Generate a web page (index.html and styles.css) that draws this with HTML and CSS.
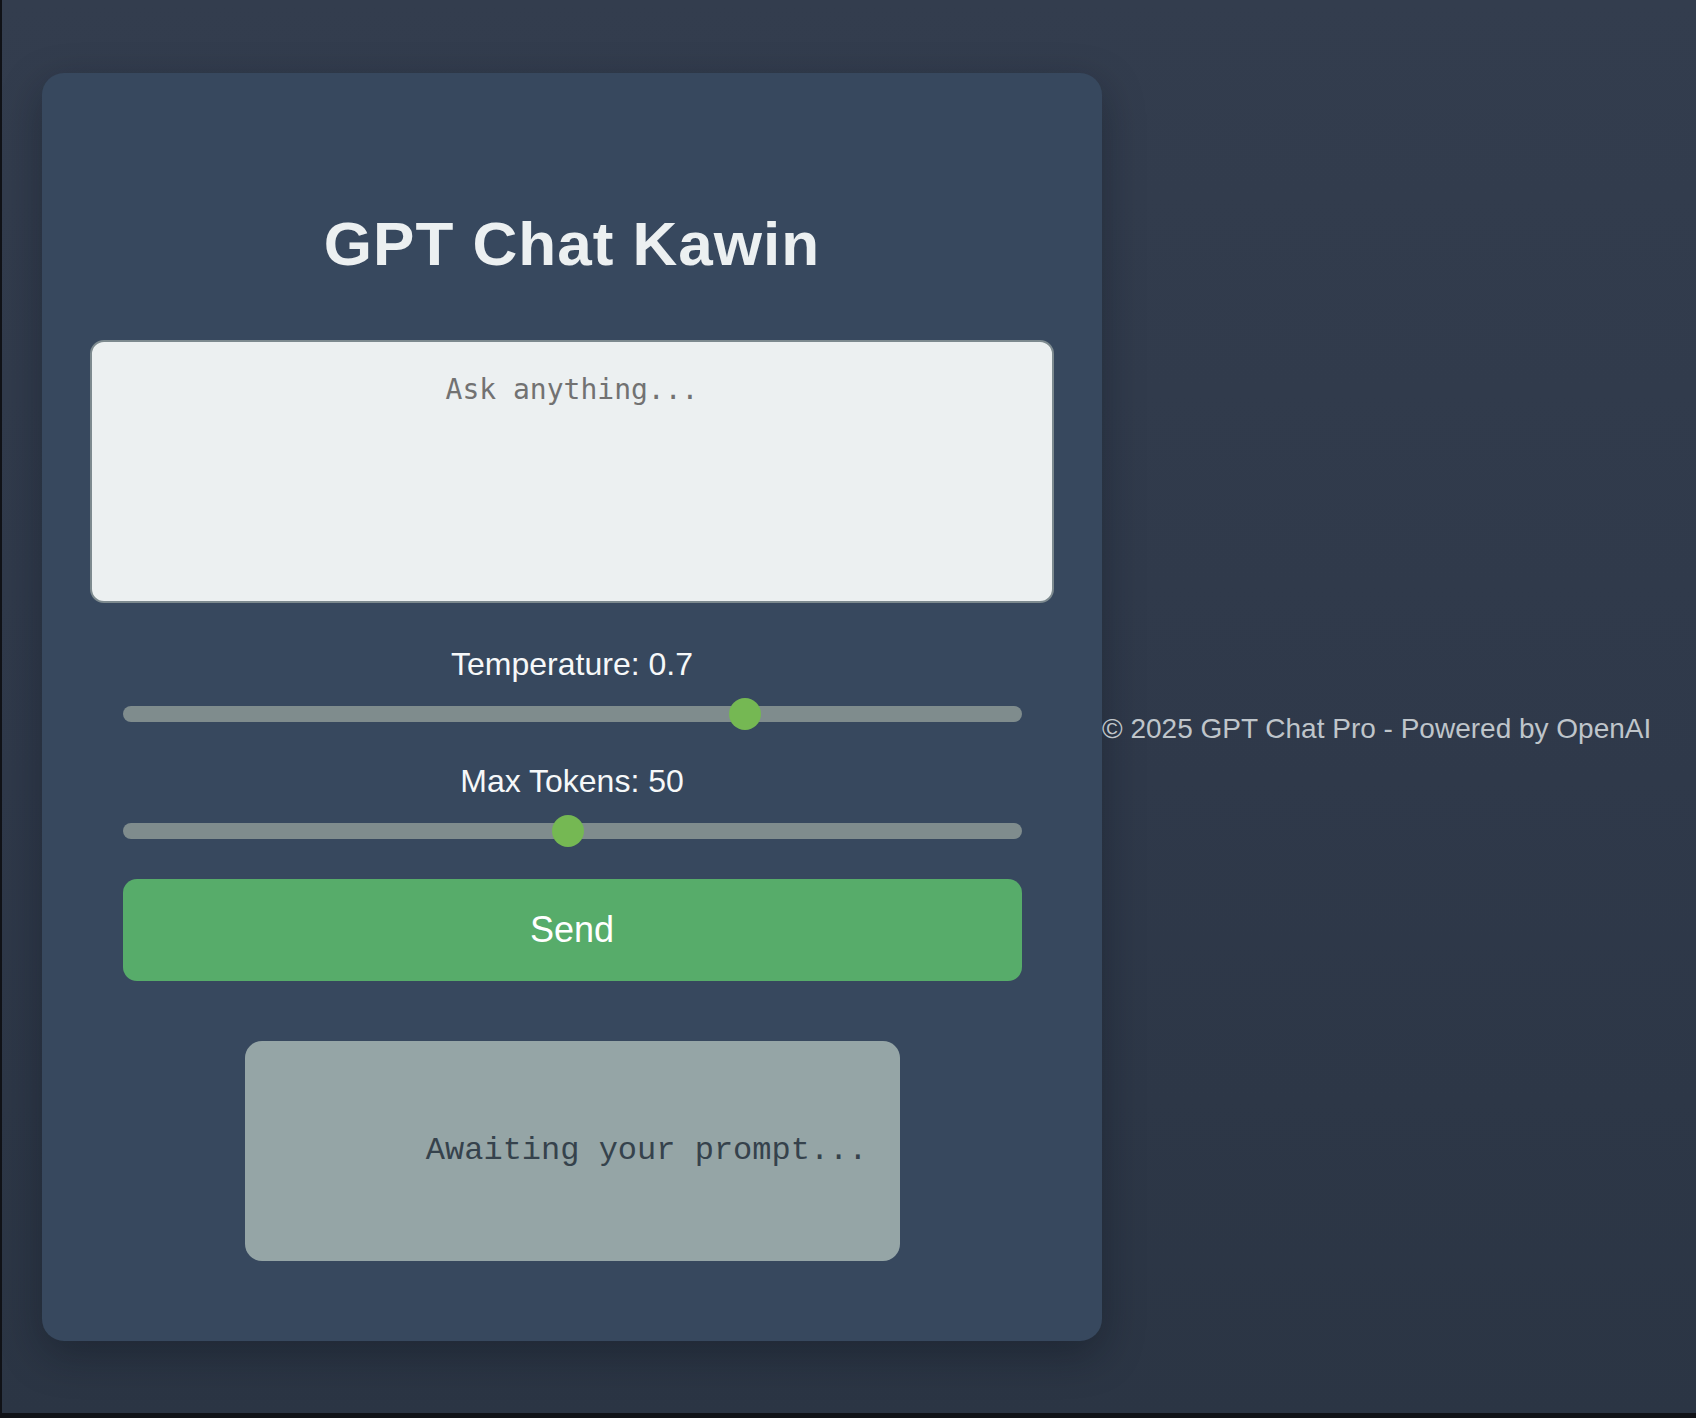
FILE: index.html
```html
<!DOCTYPE html>
<html lang="en">
<head>
<meta charset="utf-8">
<title>GPT Chat Kawin</title>
<link rel="stylesheet" href="styles.css">
</head>
<body>
  <main class="card">
    <h1 class="title">GPT Chat Kawin</h1>
    <textarea class="prompt" placeholder="Ask anything..."></textarea>
    <div class="controls">
      <label class="label label-first" for="temp">Temperature: 0.7</label>
      <input class="range range-first" id="temp" type="range" min="0" max="1" step="0.1" value="0.7">
      <label class="label label-second" for="tokens">Max Tokens: 50</label>
      <input class="range range-second" id="tokens" type="range" min="1" max="100" step="1" value="50">
      <button class="send" type="button">Send</button>
    </div>
    <div class="response">Awaiting your prompt...</div>
  </main>
  <footer class="footer">© 2025 GPT Chat Pro - Powered by OpenAI</footer>
</body>
</html>
```

FILE: styles.css
```css
html {
  height: 100%;
}

body {
  margin: 0;
  height: 100vh;
  box-sizing: border-box;
  border-left: 2px solid #101217;
  border-bottom: 5px solid #101217;
  background: linear-gradient(180deg, #333d4e 0%, #2f394a 55%, #2b3544 100%);
  display: flex;
  align-items: center;
  justify-content: flex-start;
  padding-left: 40px;
  font-family: "Liberation Sans", Arial, Helvetica, sans-serif;
}

.card {
  flex: none;
  width: 1060px;
  box-sizing: border-box;
  padding: 48px;
  background: #37485e;
  border-radius: 22px;
  box-shadow: 0 14px 40px rgba(10, 14, 22, 0.35);
  display: flex;
  flex-direction: column;
  align-items: center;
}

.title {
  margin: 88px 0 62px;
  font-size: 62px;
  line-height: 69px;
  letter-spacing: 1px;
  font-weight: bold;
  color: #ecf0f1;
  text-align: center;
}

.prompt {
  display: block;
  width: 100%;
  height: 263px;
  box-sizing: border-box;
  margin: 0;
  padding: 31px 20px;
  border: 2px solid #7d8a8f;
  border-radius: 14px;
  background: #ecf0f1;
  font-family: "DejaVu Sans Mono", monospace;
  font-size: 28px;
  color: #333;
  text-align: center;
  resize: none;
  outline: none;
}

.prompt::placeholder {
  color: #727272;
}

.controls {
  width: 899px;
  display: flex;
  flex-direction: column;
  align-items: stretch;
}

.label {
  display: block;
  font-size: 32px;
  line-height: 36px;
  color: #f6f8f9;
  text-align: center;
}

.label-first {
  margin-top: 43px;
}

.label-second {
  margin-top: 41px;
}

.range {
  -webkit-appearance: none;
  appearance: none;
  display: block;
  width: 899px;
  height: 16px;
  margin: 0;
  padding: 0;
  background: transparent;
  outline: none;
}

.range-first {
  margin-top: 24px;
}

.range-second {
  margin-top: 24px;
}

.range::-webkit-slider-runnable-track {
  height: 16px;
  background: #7f8c8d;
  border-radius: 8px;
}

.range::-webkit-slider-thumb {
  -webkit-appearance: none;
  appearance: none;
  width: 32px;
  height: 32px;
  margin-top: -8px;
  border: none;
  border-radius: 50%;
  background: #75b853;
}

.send {
  margin-top: 40px;
  height: 102px;
  border: none;
  border-radius: 14px;
  background: #57ac6a;
  color: #ffffff;
  font-family: "Liberation Sans", Arial, Helvetica, sans-serif;
  font-size: 36px;
  cursor: pointer;
}

.response {
  margin-top: 60px;
  margin-bottom: 32px;
  width: 655px;
  height: 220px;
  box-sizing: border-box;
  padding: 0 32px;
  border-radius: 17px;
  background: #95a5a6;
  display: flex;
  align-items: center;
  justify-content: flex-end;
  font-family: "Liberation Mono", "Courier New", monospace;
  font-size: 32px;
  color: #35424c;
}

.footer {
  flex: none;
  margin-top: 44px;
  font-size: 28px;
  line-height: 32px;
  color: #bfc5ca;
  white-space: nowrap;
}
```
